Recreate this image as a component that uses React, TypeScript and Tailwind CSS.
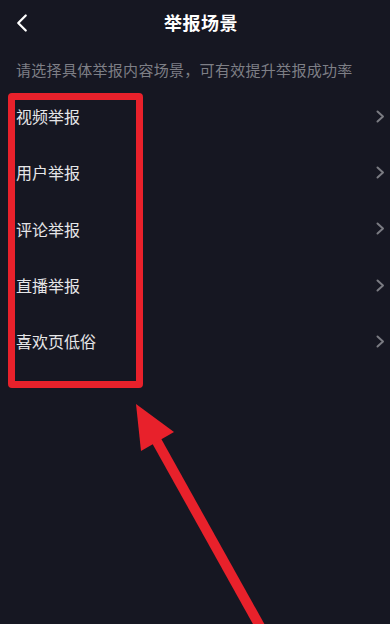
import { ChevronLeft } from "lucide-react";

const scenes = ["视频举报", "用户举报", "评论举报", "直播举报", "喜欢页低俗"];

export default function App() {
  return (
    <div
      className="relative h-[624px] w-[390px] overflow-hidden bg-[#161722] text-white"
      style={{ fontFamily: '"Noto Sans CJK SC", "Noto Sans", sans-serif' }}
    >
      <header className="relative flex h-[44px] items-center justify-center">
        <button type="button" className="absolute left-[7px] top-[8px] text-white">
          <ChevronLeft size={30} strokeWidth={1.8} />
        </button>
        <h1 className="pl-3 text-[18px] font-bold leading-none tracking-[0.5px]">举报场景</h1>
      </header>

      <p className="mt-[16px] px-4 text-[15px] leading-[20px] tracking-[0.3px] text-[#7e7f86]">
        请选择具体举报内容场景，可有效提升举报成功率
      </p>

      <ul className="mt-[8px]">
        {scenes.map((scene) => (
          <li key={scene} className="flex h-[56.3px] items-center justify-between pl-4 pr-[5px]">
            <span className="text-[16px] text-[#e6e6e8]">{scene}</span>
            <svg width="9" height="13" viewBox="0 0 9 13" fill="none">
              <polyline points="1.5,1.5 7,6.5 1.5,11.5" stroke="#7a7b82" strokeWidth="2" strokeLinecap="round" strokeLinejoin="round" />
            </svg>
          </li>
        ))}
      </ul>

      {/* annotation overlay */}
      <div className="pointer-events-none absolute left-[8px] top-[93px] h-[295px] w-[135px] rounded-[4px] border-[7px] border-[#e8212b]" />
      <svg className="pointer-events-none absolute left-0 top-0" width="390" height="624" viewBox="0 0 390 624">
        <line x1="155" y1="438" x2="262" y2="630" stroke="#e8212b" strokeWidth="10" />
        <polygon points="136,404 174,432 141,451" fill="#e8212b" />
      </svg>
    </div>
  );
}
